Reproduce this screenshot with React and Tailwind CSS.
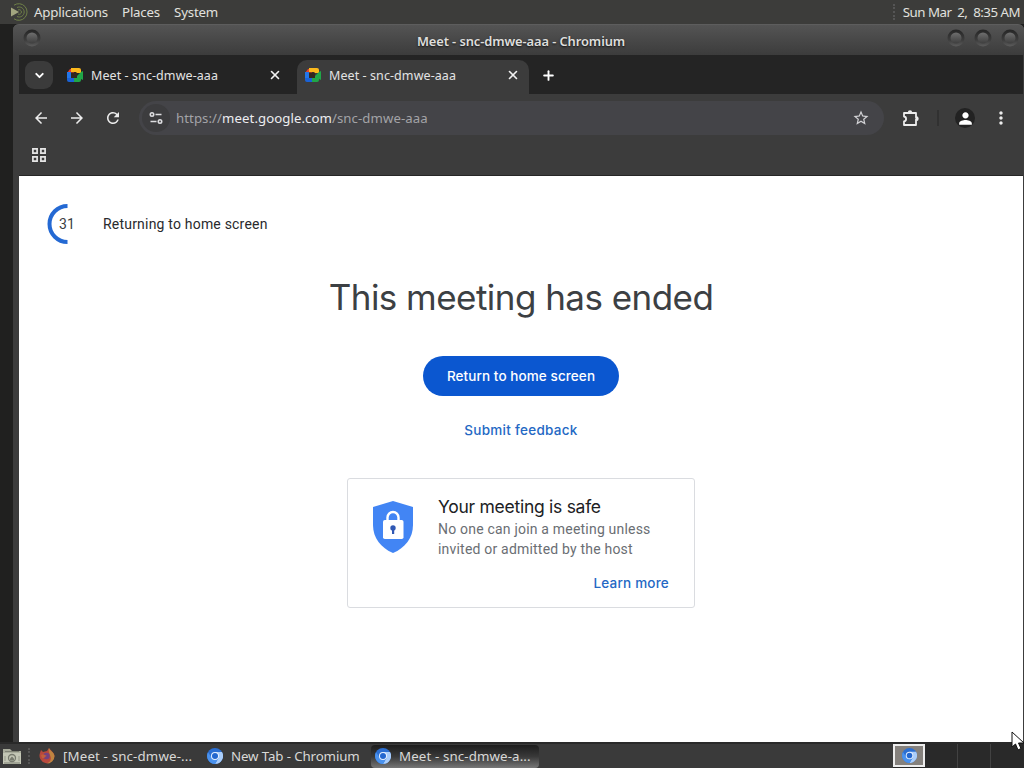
import { ChevronDown, X, Plus } from "lucide-react";
import {
  MdArrowBack,
  MdArrowForward,
  MdRefresh,
  MdStarBorder,
  MdPerson,
  MdMoreVert,
} from "react-icons/md";

const MeetIcon = ({ className }) => (
  <svg viewBox="0 0 16 14" className={className}>
    <path d="M3 1h4v4H0z" fill="#e5402d" />
    <path d="M4 0h8a2 2 0 0 1 2 2v3H9V4H4z" fill="#fbb91c" />
    <path d="M0 4h4v6H0z" fill="#2376e8" />
    <path d="M0 10h8v4H2a2 2 0 0 1-2-2z" fill="#1a62d6" />
    <path d="M8 10h2V8l4-4 2-1v9l-2-1v1a2 2 0 0 1-2 2H7v-4z" fill="#20a648" />
    <path d="M4 4.500h6v5.500H4z" fill="#33261d" />
  </svg>
);

const ChromiumIcon = ({ className }) => (
  <svg viewBox="0 0 16 16" className={className}>
    <circle cx="8" cy="8" r="8" fill="#2b6fd3" />
    <path d="M8 4h7a8 8 0 0 1-7 12l3.500-6z" fill="#a9cdfb" />
    <path d="M1 4.200A8 8 0 0 0 8 16l3.500-6H5z" fill="#4a92ee" />
    <circle cx="8" cy="8" r="4" fill="#e8f1fe" />
    <circle cx="8" cy="8" r="3" fill="#2367cf" />
  </svg>
);

const FirefoxIcon = () => (
  <svg viewBox="0 0 16 16" className="h-4 w-4 shrink-0">
    <path d="M1 5l1-3 2 2 4-1 2-3c1 2 5 4 5.500 8A7.500 7.500 0 1 1 1 5z" fill="#b8483c" />
    <path d="M10 0c1 3 5 4 5.500 8a7.500 7.500 0 0 1-8 7.500c4-1 5-4 4-7S9 3 10 0z" fill="#bf8440" />
    <circle cx="7.500" cy="8" r="3.200" fill="#74427f" />
    <path d="M2 7c2-1 4 0 6 1-2 0-2 3-5 2z" fill="#c25f3c" />
  </svg>
);

const FilesIcon = () => (
  <svg viewBox="0 0 20 17" className="h-[17px] w-5 shrink-0">
    <path d="M1 1h7l2 2h9v13H1z" fill="#a9ac9c" />
    <path d="M1 5h18v11H1z" fill="#c3c6b5" />
    <path d="M3 3.500h14M2 15h16" stroke="#7e8174" />
    <circle cx="10" cy="10" r="3.500" fill="none" stroke="#777a6e" strokeWidth="1.300" />
    <path d="M8 10.500l2-2 2 2v2H8z" fill="#777a6e" />
    <path d="M3 8v5M17 8v5" stroke="#959889" />
  </svg>
);

const MateIcon = () => (
  <svg viewBox="0 0 20 18" className="h-[18px] w-5 shrink-0">
    <g fill="none" stroke="#6f8048" strokeWidth="1">
      <path d="M5 2.200a8.300 8.300 0 1 1 0 13.600" />
      <path d="M8 4.500a5 5 0 1 1 0 9" />
      <path d="M9 7a2.300 2.300 0 1 1 0 4" />
    </g>
    <path d="M2 4.500l8 4.500-8 4.500z" fill="#a2a57f" />
  </svg>
);

const TuneIcon = () => (
  <svg viewBox="0 0 14 14" className="h-[14px] w-[14px]" fill="none" stroke="#dedee1" strokeWidth="1.600">
    <circle cx="3" cy="3.500" r="1.700" />
    <path d="M6.500 3.500h6M1.500 10.500h6" />
    <circle cx="11" cy="10.500" r="1.700" />
  </svg>
);

const ExtensionIcon = () => (
  <svg viewBox="0 0 18 18" className="ml-[18px] h-[18px] w-[18px]" fill="#ededed">
    <path
      d="M2 4h12v4.500h1v2h-1V16H2v-3.500c2.800-.5 2.800-4.500 0-5z"
      fill="none"
      stroke="#ededed"
      strokeWidth="1.800"
      strokeLinejoin="round"
    />
    <path d="M5.800 3.500a2.200 2.200 0 0 1 4.400 0zM14.500 7.500a2.200 2.200 0 0 1 0 4.400z" />
  </svg>
);

const AppsIcon = () => (
  <svg viewBox="0 0 14 14" className="h-[14px] w-[14px]" fill="none" stroke="#e6e6e6" strokeWidth="1.700">
    <path d="M.9.9h4.200v4.200H.9zM8.900.9h4.200v4.200H8.900zM.9 8.900h4.200v4.200H.9zM8.900 8.900h4.200v4.200H8.900z" />
  </svg>
);

const ShieldIcon = () => (
  <svg viewBox="0 0 42 54" className="h-[54px] w-[42px] shrink-0">
    <path d="M21 1L41 7v18c0 13-8 23-20 28C9 48 1 38 1 25V7z" fill="#4285f4" />
    <path d="M15.500 20v-2.500a5.500 5.500 0 0 1 11 0V20" fill="none" stroke="#fff" strokeWidth="2.400" />
    <rect x="11" y="20" width="20.500" height="19" rx="1.800" fill="#fff" />
    <circle cx="21" cy="28" r="2.700" fill="#3058b4" />
    <path d="M20 29h2.200v5H20z" fill="#3058b4" />
  </svg>
);

const RoundButton = () => (
  <svg viewBox="0 0 18 20" className="h-5 w-[18px]">
    <defs>
      <linearGradient id="ring" x1="0" y1="0" x2="0" y2="1">
        <stop offset="0" stopColor="#252525" />
        <stop offset="0.600" stopColor="#3c3c3c" />
        <stop offset="1" stopColor="#5c5c5c" />
      </linearGradient>
      <linearGradient id="knob" x1="0" y1="0" x2="0" y2="1">
        <stop offset="0" stopColor="#6e6e6e" />
        <stop offset="1" stopColor="#3e3e3e" />
      </linearGradient>
    </defs>
    <circle cx="9" cy="10" r="8.500" fill="url(#ring)" />
    <circle cx="9" cy="10" r="5.500" fill="url(#knob)" />
  </svg>
);

const TopPanel = () => (
  <header className="flex h-6 shrink-0 items-center bg-[#3c3c3a] pl-[9px] pr-[4px] text-[13.300px] leading-6 text-[#e1e1df]">
    <MateIcon />
    <nav className="ml-[5px] flex gap-[14px] tracking-[-0.200px]">
      <span>Applications</span>
      <span>Places</span>
      <span>System</span>
    </nav>
    <div className="ml-auto flex items-center gap-[8px]">
      <span className="h-4 border-l-2 border-dotted border-[#555]" />
      <span className="whitespace-pre tracking-[-0.520px]">Sun Mar  2,  8:35 AM</span>
    </div>
  </header>
);

const TitleBar = () => (
  <div className="grid h-[31px] grid-cols-[1fr_auto_1fr] items-center rounded-t-md border-t border-[#5d5d5d] bg-linear-to-b from-[#545454] to-[#3c3c3c] pl-[10px] pr-[5px]">
    <span className="mb-[5px]">
      <RoundButton />
    </span>
    <span className="pt-[3px] text-[12.900px] font-semibold tracking-[-0.090px] text-[#dededc] [text-shadow:0_1px_2px_#111]">
      Meet - snc-dmwe-aaa - Chromium
    </span>
    <div className="mb-[5px] flex justify-end gap-[9px]">
      <RoundButton />
      <RoundButton />
      <RoundButton />
    </div>
  </div>
);

const Tab = ({ active }) => (
  <div
    className={
      active
        ? "flex h-[34px] w-[232px] items-center rounded-t-[10px] bg-[#3c3c3c] pb-[5px] pl-2 pr-[9px]"
        : "flex h-[34px] w-[238px] items-center pb-[5px] pl-2 pr-[15px]"
    }
  >
    <MeetIcon className="h-[14px] w-4" />
    <span className="ml-2 pt-[3px] text-[12.500px] tracking-[0.080px] text-[#e3e3e3]">Meet - snc-dmwe-aaa</span>
    <X className="ml-auto h-[14px] w-[14px] text-[#f1f1f1]" strokeWidth={2.8} />
  </div>
);

const TabStrip = () => (
  <div className="flex h-[39px] items-end bg-[#242424] pl-[6px]">
    <button className="mb-[5px] mr-[6px] flex h-7 w-7 items-center justify-center rounded-[9px] bg-[#3b3b3b]">
      <ChevronDown className="h-[13px] w-[13px] text-white" strokeWidth={3.5} />
    </button>
    <Tab />
    <Tab active />
    <Plus className="mb-[11px] ml-3 h-[15px] w-[15px] text-white" strokeWidth={3} />
  </div>
);

const Toolbar = () => (
  <div className="flex h-12 items-center pl-[13px] text-[#ededed]">
    <MdArrowBack className="h-[18px] w-[18px]" />
    <MdArrowForward className="ml-[18px] h-[18px] w-[18px]" />
    <MdRefresh className="ml-[18px] h-[18px] w-[18px]" />
    <div className="ml-[17px] flex h-[34px] w-[745px] items-center rounded-full bg-[#444448] pl-[3px] pr-[14px]">
      <span className="flex h-7 w-7 items-center justify-center rounded-full bg-[#3c3c3e]">
        <TuneIcon />
      </span>
      <span className="ml-[6px] pt-[2px] text-[13.200px] tracking-[0.080px] text-[#a3a3a7]">
        https://<span className="text-[#ededf0]">meet.google.com</span>/snc-dmwe-aaa
      </span>
      <MdStarBorder className="ml-auto h-[18px] w-[18px] text-[#d3d3d6]" />
    </div>
    <ExtensionIcon />
    <span className="ml-[17px] h-4 w-[2px] bg-[#313131]" />
    <span className="ml-[16px] flex h-5 w-5 items-center justify-center rounded-full bg-[#222]">
      <MdPerson className="h-[19px] w-[19px] text-white" />
    </span>
    <MdMoreVert className="ml-[16px] h-5 w-5" />
  </div>
);

const MeetingEnded = () => (
  <main className="flex-1 bg-white pt-7">
    <div className="flex h-10 items-center pl-7">
      <div className="relative flex h-10 w-10 items-center justify-center">
        <svg viewBox="0 0 40 40" className="absolute inset-0 h-10 w-10">
          <path d="M20.500 2A18 18 0 0 0 20.500 38" fill="none" stroke="#2469d3" strokeWidth="4" />
        </svg>
        <span className="relative font-[Roboto,sans-serif] text-sm tracking-[0.200px] text-[#3c4043]">31</span>
      </div>
      <span className="ml-4 font-[Roboto,sans-serif] text-sm tracking-[0.200px] text-[#292a2d]">
        Returning to home screen
      </span>
    </div>
    <div className="flex flex-col items-center font-[Inter,sans-serif]">
      <h1 className="mt-[31px] text-[35px] leading-11 tracking-[-0.540px] text-[#3c4043]">This meeting has ended</h1>
      <button className="mt-[37px] h-10 w-[196px] rounded-full bg-[#0b57d0] text-[13.500px] font-medium tracking-[0.090px] text-white">
        Return to home screen
      </button>
      <button className="mt-[24px] h-5 text-[13.500px] font-medium leading-5 tracking-[0.270px] text-[#2468c4]">
        Submit feedback
      </button>
      <section className="mt-[38px] flex h-[130px] w-[348px] rounded-[3px] border border-[#dadce0] pl-6 pr-[25px] pt-[17px]">
        <div className="mt-1">
          <ShieldIcon />
        </div>
        <div className="ml-6 flex flex-1 flex-col">
          <h2 className="text-[17.500px] leading-[22px] tracking-[-0.270px] text-[#202124]">Your meeting is safe</h2>
          <p className="mt-[1px] whitespace-nowrap font-[Roboto,sans-serif] text-sm leading-5 tracking-[0.200px] text-[#6a6e73]">
            No one can join a meeting unless
            <br />
            invited or admitted by the host
          </p>
          <button className="mt-[14px] self-end text-[13.500px] font-medium leading-5 tracking-[0.200px] text-[#2468c4]">
            Learn more
          </button>
        </div>
      </section>
    </div>
  </main>
);

const TaskBar = () => (
  <footer className="flex h-[26px] shrink-0 items-center border-t-2 border-[#292929] bg-[#3a3a3a] pl-[2px] text-[13.300px] text-[#d9d9d7]">
    <FilesIcon />
    <span className="ml-[6px] h-4 border-l-2 border-dotted border-[#555]" />
    <div className="ml-[9px] flex w-[168px] items-center gap-2">
      <FirefoxIcon />
      <span className="pt-[2px] tracking-[0.150px]">[Meet - snc-dmwe-...</span>
    </div>
    <div className="flex w-[164px] items-center gap-2">
      <ChromiumIcon className="h-4 w-4" />
      <span className="pt-[2px] tracking-[-0.120px]">New Tab - Chromium</span>
    </div>
    <div className="flex h-[23px] w-[168px] items-center gap-2 rounded-sm bg-linear-to-b from-[#1d1d1d] via-[#393939] to-[#777] pl-1">
      <ChromiumIcon className="h-4 w-4" />
      <span className="pt-[2px] tracking-[0.120px]">Meet - snc-dmwe-a...</span>
    </div>
    <div className="ml-auto flex h-6 w-[131px] divide-x divide-[#424242] bg-[#292929]">
      <div className="flex h-[23px] w-8 items-center justify-center border-2 border-[#ededed] bg-[#85817d]">
        <ChromiumIcon className="h-[15px] w-[15px]" />
      </div>
      <div className="w-[33px]" />
      <div className="w-[33px]" />
      <div className="flex-1" />
    </div>
  </footer>
);

export default function App() {
  return (
    <div className="relative flex h-screen w-full flex-col overflow-hidden bg-[#20201f] font-['Noto_Sans',sans-serif]">
      <TopPanel />
      <div className="ml-[13px] flex flex-1 flex-col rounded-t-md bg-[#3c3c3c]">
        <TitleBar />
        <div className="ml-[6px] mr-px flex flex-1 flex-col">
          <TabStrip />
          <div className="h-[82px] border-b border-[#262626]">
            <Toolbar />
            <div className="pl-[13px] pt-[6px]">
              <AppsIcon />
            </div>
          </div>
          <MeetingEnded />
        </div>
      </div>
      <TaskBar />
      <svg viewBox="0 0 14 20" className="absolute left-[1011px] top-[731px] h-5 w-[14px]">
        <path d="M1 1v15l3.500-3 2.500 6 3-1.500-2.500-5.500H13z" fill="#fff" stroke="#111" />
      </svg>
    </div>
  );
}
